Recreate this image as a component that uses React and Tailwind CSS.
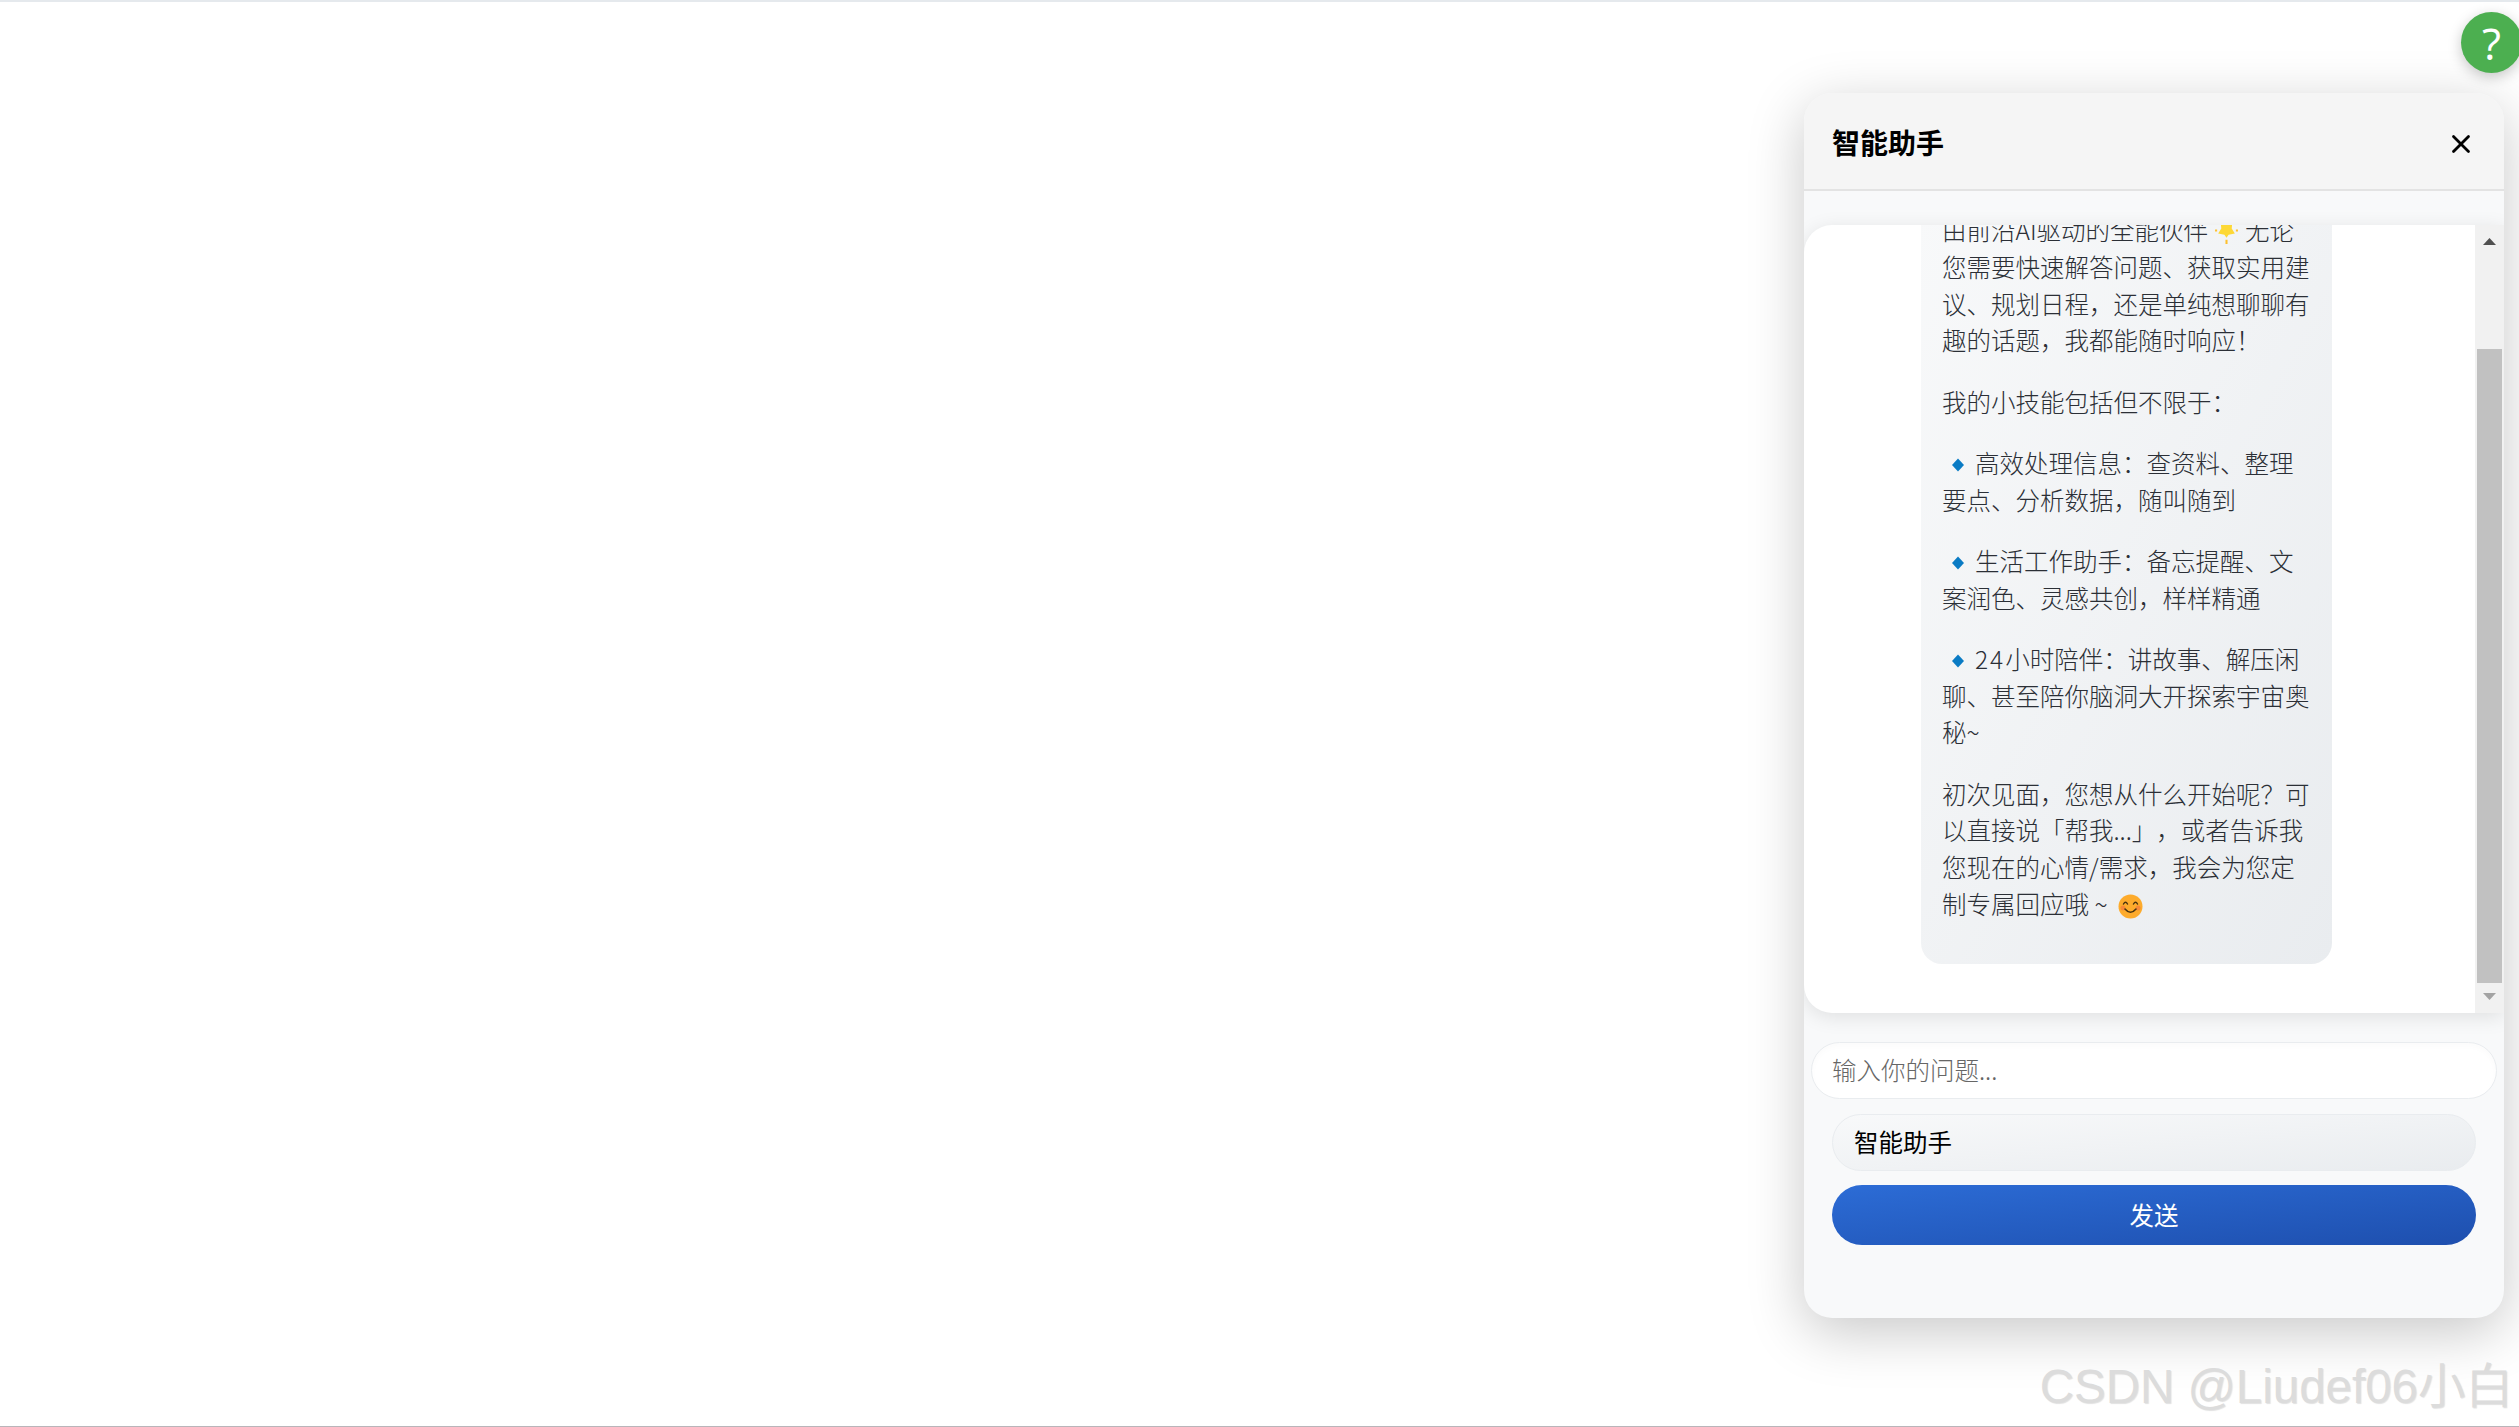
import { X } from "lucide-react";

const Diamond = () => (
  <svg viewBox="0 0 26 26" className="inline-block w-[26px] h-[26px] align-[-5px] mr-[7px]">
    <path d="M16 6.5 L22 13 L16 19.5 L10 13 Z" fill="#0a7bc4" />
  </svg>
);

const Star = () => (
  <svg viewBox="0 0 24 24" className="inline-block w-[25px] h-[25px] align-[-4px] mx-[6px]">
    <path d="M6 0 L18 0 L17 9 L20 14 L14 15 L12 18 L10 15 L4 14 L7 9 Z" fill="#fdd835" />
    <path d="M11 20 h2 v4 h-2 Z M1 10 h2 v2 h-2 Z M21 10 h2 v2 h-2 Z" fill="#fdc02f" />
  </svg>
);

const Smile = () => (
  <svg viewBox="0 0 25 25" className="inline-block w-[25px] h-[25px] align-[-5px] ml-[5px]">
    <circle cx="12.5" cy="12.5" r="12" fill="#fdab2c" />
    <circle cx="5" cy="14" r="2.5" fill="#f4793b" opacity="0.7" />
    <circle cx="20" cy="14" r="2.5" fill="#f4793b" opacity="0.7" />
    <path d="M5.5 10 Q7.5 6.5 9.5 10 M15.5 10 Q17.5 6.5 19.5 10" fill="none" stroke="#4a3310" strokeWidth="1.5" strokeLinecap="round" />
    <path d="M7 15 Q12.5 21.5 18 15" fill="none" stroke="#4a3310" strokeWidth="1.6" strokeLinecap="round" />
  </svg>
);

function Scrollbar() {
  return (
    <div className="w-[29px] shrink-0 bg-[#f1f1f1] flex flex-col items-center">
      <svg viewBox="0 0 13 7" className="w-[13px] h-[7px] mt-[13px] shrink-0">
        <path d="M6.5 0 L13 7 L0 7 Z" fill="#505050" />
      </svg>
      <div className="w-[25px] h-[634px] mt-[104px] bg-[#c1c1c1] shrink-0" />
      <svg viewBox="0 0 13 7" className="w-[13px] h-[7px] mt-[10px] shrink-0">
        <path d="M0 0 L13 0 L6.5 7 Z" fill="#a3a3a3" />
      </svg>
    </div>
  );
}

export default function App() {
  return (
    <div
      className="relative h-[1427px] overflow-hidden bg-white border-t-2 border-t-[#e5e9ed] border-b border-b-[#b9b5ba] flex justify-end items-start pr-[15px] pt-[91px]"
      style={{ fontFamily: '"Noto Sans CJK SC", sans-serif' }}
    >
      {/* help button */}
      <div className="absolute right-[-3px] top-[10px] w-[61px] h-[61px] rounded-full bg-[#4caf50] shadow-[0_4px_14px_rgba(0,0,0,0.22)] flex items-center justify-center text-white text-[44px] font-medium leading-none" style={{ fontFamily: '"Open Sans", sans-serif' }}>
        ?
      </div>

      <div className="w-[700px] h-[1225px] rounded-[28px] bg-[#f8f9fa] shadow-[0_14px_56px_rgba(0,0,0,0.22)] flex flex-col overflow-hidden">
        {/* header */}
        <div className="h-[98px] shrink-0 bg-[#f5f5f5] border-b-2 border-[#e3e3e3] flex items-center justify-between pl-[28px] pr-[28px]">
          <span className="text-[28px] font-bold text-black leading-none mt-[2px]">智能助手</span>
          <X className="w-[30px] h-[30px] text-black mt-[5px]" strokeWidth={2.2} />
        </div>

        {/* messages */}
        <div className="mt-[34px] h-[788px] shrink-0 flex bg-white rounded-l-[28px] overflow-hidden shadow-[0_4px_20px_rgba(0,0,0,0.1)]">
          <div className="flex-1 overflow-hidden pl-[117px]">
            <div className="-mt-[13px] w-[411px] px-[21px] pb-[17px] rounded-b-[21px] bg-linear-to-br from-[#f8f9fa] to-[#e9ecef] text-[24.5px] leading-[36.75px] text-[#2b2f36] font-light">
              <p className="mb-[24.5px]">由前沿AI驱动的全能伙伴<Star />{"无论您需要快速解答问题、获取实用建议、规划日程\uFF0C还是单纯想聊聊有趣的话题\uFF0C我都能随时响应\uFF01"}</p>
              <p className="mb-[24.5px]">{"我的小技能包括但不限于\uFF1A"}</p>
              <p className="mb-[24.5px]"><Diamond />{"高效处理信息\uFF1A查资料、整理要点、分析数据\uFF0C随叫随到"}</p>
              <p className="mb-[24.5px]"><Diamond />{"生活工作助手\uFF1A备忘提醒、文案润色、灵感共创\uFF0C样样精通"}</p>
              <p className="mb-[24.5px]"><Diamond /><span className="tracking-[2px]">24</span>{"小时陪伴\uFF1A讲故事、解压闲聊、甚至陪你脑洞大开探索宇宙奥秘~"}</p>
              <p className="mb-[24.5px] [text-spacing-trim:space-all]">{"初次见面\uFF0C您想从什么开始呢\uFF1F可以直接说「帮我...」\uFF0C或者告诉我您现在的心情/需求\uFF0C我会为您定制专属回应哦 ~ "}<Smile /></p>
            </div>
          </div>
          <Scrollbar />
        </div>

        {/* input area */}
        <div className="flex flex-col mt-[29px]">
          <input
            placeholder="输入你的问题..."
            className="mx-[7px] h-[57px] rounded-full border border-[#e9ecef] bg-white px-[20px] pb-[2px] text-[24.5px] font-light outline-none placeholder:text-[#666] shadow-[inset_0_3px_6px_rgba(0,0,0,0.02)]"
          />
          <div className="mx-[28px] mt-[15px] h-[57px] rounded-full border border-[#e9ecef] bg-linear-to-br from-[#f8f9fa] to-[#e9ecef] px-[21px] flex items-center text-[24.5px] text-black">
            智能助手
          </div>
          <button className="mx-[28px] mt-[14px] h-[60px] rounded-full bg-linear-to-br from-[#2c6cd6] to-[#1e4fae] text-white text-[24.5px]">
            发送
          </button>
        </div>
      </div>

      {/* watermark */}
      <div className="absolute right-[6px] bottom-[16px] text-[47.5px] leading-none text-[#dcdcdc] whitespace-nowrap [text-shadow:1px_1px_1px_rgba(0,0,0,0.12)]" style={{ fontFamily: '"Liberation Sans", "Noto Sans CJK SC", sans-serif' }}>
        CSDN @Liudef06小白
      </div>
    </div>
  );
}
